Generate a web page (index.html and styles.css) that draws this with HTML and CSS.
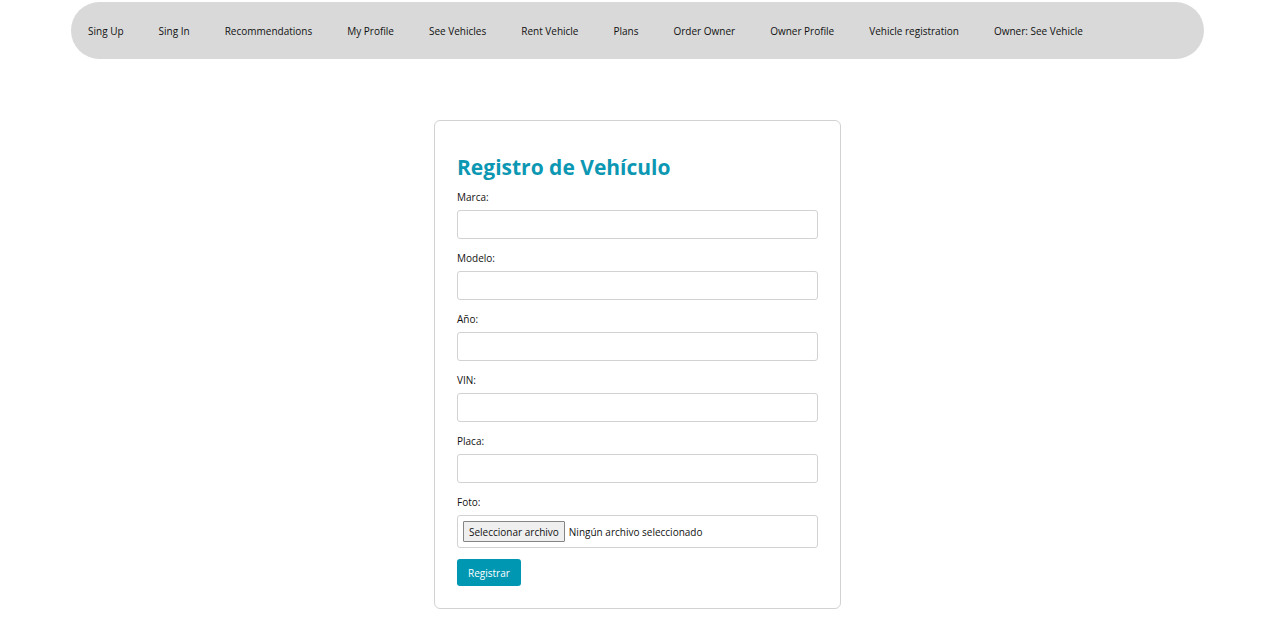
FILE: index.html
```html
<!DOCTYPE html>
<html lang="es">
<head>
<meta charset="utf-8">
<meta name="viewport" content="width=device-width, initial-scale=1">
<title>Registro de Vehículo</title>
<link rel="stylesheet" href="styles.css">
</head>
<body>
<nav class="navbar">
  <a class="nav-link" href="#">Sing Up</a>
  <a class="nav-link" href="#">Sing In</a>
  <a class="nav-link" href="#">Recommendations</a>
  <a class="nav-link" href="#">My Profile</a>
  <a class="nav-link" href="#">See Vehicles</a>
  <a class="nav-link" href="#">Rent Vehicle</a>
  <a class="nav-link" href="#">Plans</a>
  <a class="nav-link" href="#">Order Owner</a>
  <a class="nav-link" href="#">Owner Profile</a>
  <a class="nav-link" href="#">Vehicle registration</a>
  <a class="nav-link" href="#">Owner: See Vehicle</a>
</nav>
<main class="page">
  <form class="card">
    <h1 class="title">Registro de Vehículo</h1>
    <div class="field">
      <label for="marca">Marca:</label>
      <input class="control" id="marca" type="text">
    </div>
    <div class="field">
      <label for="modelo">Modelo:</label>
      <input class="control" id="modelo" type="text">
    </div>
    <div class="field">
      <label for="anio">Año:</label>
      <input class="control" id="anio" type="text">
    </div>
    <div class="field">
      <label for="vin">VIN:</label>
      <input class="control" id="vin" type="text">
    </div>
    <div class="field">
      <label for="placa">Placa:</label>
      <input class="control" id="placa" type="text">
    </div>
    <div class="field">
      <label for="foto">Foto:</label>
      <div class="file">
        <span class="file-button">Seleccionar archivo</span>
        <span class="file-name">Ningún archivo seleccionado</span>
        <input class="file-input" id="foto" type="file">
      </div>
    </div>
    <button class="submit" type="submit">Registrar</button>
  </form>
</main>
</body>
</html>
```
FILE: styles.css
```css
* {
  box-sizing: border-box;
}

body {
  margin: 0 5px 0 0;
  padding-top: 2px;
  background: #fff;
  color: #111;
  font-family: "Segoe UI", "Open Sans", "Noto Sans", sans-serif;
  font-size: 10px;
  line-height: 16px;
}

.navbar {
  display: flex;
  flex-wrap: wrap;
  align-items: center;
  gap: 0 35px;
  margin: 0 71px;
  padding: 21px 17px 20px;
  border-radius: 29px;
  background: #d9d9d9;
}

.nav-link {
  color: #111;
  text-decoration: none;
}

.page {
  padding: 61px 16px 23px;
}

.card {
  display: flex;
  flex-direction: column;
  align-items: stretch;
  gap: 11px;
  max-width: 407px;
  margin: 0 auto;
  padding: 30px 22px 22px;
  border: 1px solid #d2d2d2;
  border-radius: 6px;
}

.title {
  margin: 0 0 -5px;
  color: #0c97b3;
  font-size: 21px;
  font-weight: 700;
  line-height: 32px;
}

.field {
  display: flex;
  flex-direction: column;
  gap: 5px;
}

.control {
  width: 100%;
  height: 29px;
  padding: 5px;
  border: 1px solid #d2d2d2;
  border-radius: 3px;
  background: #fff;
  font: inherit;
}

.file {
  position: relative;
  display: flex;
  align-items: center;
  gap: 4px;
  padding: 5px;
  border: 1px solid #d2d2d2;
  border-radius: 3px;
}

.file-button {
  padding: 2px 5px 1px;
  border: 1px solid #858585;
  border-radius: 1px;
  background: #efefef;
}

.file-input {
  position: absolute;
  inset: 0;
  width: 100%;
  opacity: 0;
  cursor: pointer;
}

.submit {
  align-self: flex-start;
  padding: 6px 11px 5px;
  border: 0;
  border-radius: 3px;
  background: #0097b2;
  color: #fff;
  font: inherit;
  cursor: pointer;
}
```
